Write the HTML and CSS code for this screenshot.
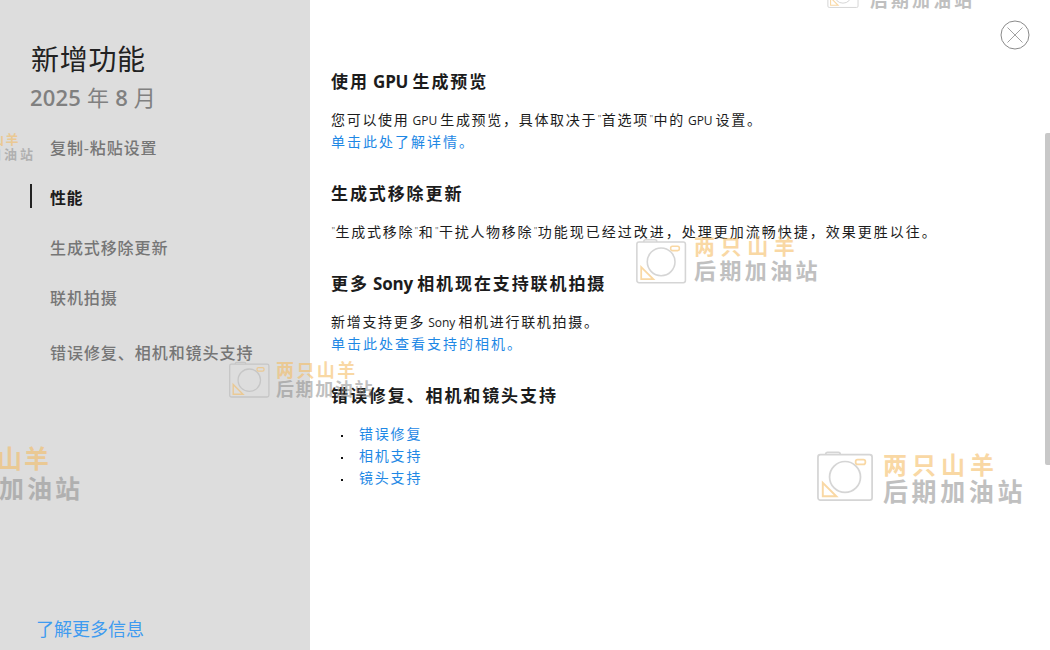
FILE: index.html
```html
<!DOCTYPE html>
<html lang="zh-CN">
<head>
<meta charset="utf-8">
<title>新增功能</title>
<link rel="stylesheet" href="styles.css">
</head>
<body>
<div class="app">
  <aside class="side">
    <h1 class="title">新增功能</h1>
    <div class="date">2025 <span class="cj">年</span> 8 <span class="cj">月</span></div>
    <nav class="nav">
      <a class="nav-item">复制-粘贴设置</a>
      <a class="nav-item active">性能</a>
      <a class="nav-item">生成式移除更新</a>
      <a class="nav-item">联机拍摄</a>
      <a class="nav-item last">错误修复、相机和镜头支持</a>
    </nav>
    <a class="more">了解更多信息</a>
  </aside>
  <main class="main">
    <section class="sec">
      <h2>使用<span class="hl"> GPU </span>生成预览</h2>
      <p>您可以使用<span class="lat">GPU</span>生成预览，具体取决于<span class="q">"</span>首选项<span class="q">"</span>中的<span class="lat">GPU</span>设置。<br><a>单击此处了解详情。</a></p>
    </section>
    <section class="sec">
      <h2>生成式移除更新</h2>
      <p><span class="q">"</span>生成式移除<span class="q">"</span>和<span class="q">"</span>干扰人物移除<span class="q">"</span><span class="wide">功能现已经过改进，处理更加流畅快捷，效果更胜以往。</span></p>
    </section>
    <section class="sec">
      <h2>更多<span class="hl"> Sony </span>相机现在支持联机拍摄</h2>
      <p>新增支持更多<span class="lat">Sony</span>相机进行联机拍摄。<br><a>单击此处查看支持的相机。</a></p>
    </section>
    <section class="sec">
      <h2>错误修复、相机和镜头支持</h2>
      <ul>
        <li><a>错误修复</a></li>
        <li><a>相机支持</a></li>
        <li><a>镜头支持</a></li>
      </ul>
    </section>
    <button class="close" aria-label="关闭">
      <svg width="30" height="30" viewBox="0 0 30 30"><circle cx="15" cy="15" r="14" fill="none" stroke="#8a8a8a" stroke-width="1"/><path d="M7.5 7.5 22.5 22.5M22.5 7.5 7.5 22.5" stroke="#8a8a8a" stroke-width=".8" fill="none"/></svg>
    </button>
    <div class="scroll"></div>
  </main>
  <div class="wm wm-top">
    <svg class="cam" viewBox="0 0 60 52"><use href="#cam"/></svg>
    <div class="wm-t"><b>两只山羊</b><i>后期加油站</i></div>
  </div>
  <div class="wm wm-a">
    <svg class="cam" viewBox="0 0 60 52"><use href="#cam"/></svg>
    <div class="wm-t"><b>两只山羊</b><i>后期加油站</i></div>
  </div>
  <div class="wm wm-b">
    <svg class="cam" viewBox="0 0 60 52"><use href="#cam"/></svg>
    <div class="wm-t"><b>两只山羊</b><i>后期加油站</i></div>
  </div>
  <div class="wm wm-c">
    <svg class="cam" viewBox="0 0 60 52"><use href="#cam"/></svg>
    <div class="wm-t"><b>两只山羊</b><i>后期加油站</i></div>
  </div>
  <div class="wm wm-d"><div class="wm-t"><b>两只山羊</b><i>后期加油站</i></div></div>
  <div class="wm wm-e"><div class="wm-t"><b>两只山羊</b><i>后期加油站</i></div></div>
</div>
<svg class="defs" width="0" height="0">
  <defs>
    <g id="cam">
      <path d="M9 4V3.500Q9 1.500 11 1.500H22Q24 1.500 24 3.500V4" fill="none" stroke="#b4b4b4" stroke-width="1.800"/>
      <rect x="1" y="4" width="56" height="47" rx="2.500" fill="none" stroke="#b4b4b4" stroke-width="1.800"/>
      <circle cx="29" cy="27" r="16" fill="none" stroke="#b4b4b4" stroke-width="1.800"/>
      <rect x="40" y="9" width="10" height="5" rx="2" fill="none" stroke="#f5b95a" stroke-width="1.800"/>
      <path d="M6 33V47H20Z" fill="none" stroke="#f5b95a" stroke-width="2"/>
    </g>
  </defs>
</svg>
</body>
</html>
```
FILE: styles.css
```css
* { box-sizing: border-box; }
html, body { margin: 0; height: 100%; overflow: hidden; background: #fff; }
body { font-family: "Open Sans", "Noto Sans CJK SC", sans-serif; color: #1c1c1c; }
.app { display: flex; width: 1050px; height: 650px; position: relative; overflow: hidden; }
.side { width: 310px; flex: none; background: #dddddd; display: flex; flex-direction: column; padding: 40px 0 0 31px; }
.title { margin: 0; font-size: 28px; line-height: 38px; font-weight: 400; color: #222; letter-spacing: .7px; }
.date { margin: 3px 0 0 -1px; font-size: 22px; line-height: 32px; font-weight: 600; color: #808080; letter-spacing: .2px; }
.cj { font-weight: 400; }
.nav { display: flex; flex-direction: column; margin: 13px 0 0 -1px; }
.nav-item { display: block; height: 50px; padding: 10px 0 0 20px; font-size: 16px; line-height: 24px; font-weight: 500; color: #767676; letter-spacing: .9px; }
.nav-item.active { color: #1c1c1c; font-weight: 700; position: relative; letter-spacing: .5px; }
.nav-item.active::before { content: ""; position: absolute; left: 0; top: 8px; width: 2px; height: 24px; background: #222; }
.nav-item.last { margin-top: 5px; letter-spacing: .95px; }
.more { margin-top: auto; margin-left: 5px; margin-bottom: 8px; font-size: 18px; line-height: 26px; color: #3f9bf0; }
.main { flex: 1; position: relative; padding: 69px 0 0 21px; }
.sec { margin-bottom: 28px; }
h2 { margin: 0 0 15px; font-size: 17px; line-height: 25px; font-weight: 700; color: #1c1c1c; letter-spacing: 1.9px; }
.hl { letter-spacing: -.2px; }
p { margin: 0; font-size: 14px; line-height: 22px; letter-spacing: 1.7px; color: #1c1c1c; }
p a { letter-spacing: 2px; }
.wide { letter-spacing: 2px; }
.lat { font-size: 12px; line-height: 0; letter-spacing: 0; margin: 0 3px 0 3px; }
.q { font-size: 9px; line-height: 0; letter-spacing: 0; color: #666; vertical-align: 3px; padding: 0 .5px; }
a { color: #1e88e5; }
ul { list-style: none; margin: 15px 0 0; padding: 0 0 0 28px; font-size: 14px; line-height: 22px; letter-spacing: 1.8px; }
li { position: relative; }
li::before { content: ""; position: absolute; left: -18px; top: 12px; width: 2px; height: 2px; background: #111; }
.close { position: absolute; right: 20px; top: 20px; width: 30px; height: 30px; padding: 0; border: 0; background: none; display: block; }
.close svg { display: block; }
.scroll { position: absolute; right: 0; top: 133px; width: 5px; height: 332px; background: #c8c8c8; border-radius: 2px 0 0 2px; }
.defs { position: absolute; }
.wm { position: absolute; display: flex; align-items: center; pointer-events: none; opacity: .55; }
.cam { display: block; flex: none; overflow: visible; }
.wm-t { display: flex; flex-direction: column; font-family: "Noto Sans CJK SC", sans-serif; font-weight: 700; }
.wm-t b { color: #f5b95a; font-weight: 700; }
.wm-t i { color: #8d8d8d; font-style: normal; font-weight: 700; }
.wm-b { left: 636px; top: 238px; gap: 6px; }
.wm-b .cam { width: 52px; height: 46px; }
.wm-b .wm-t { margin-top: -8px; }
.wm-b .wm-t b { font-size: 21px; line-height: 24px; letter-spacing: 5.600px; }
.wm-b .wm-t i { font-size: 22px; line-height: 24px; letter-spacing: 3.400px; }
.wm-c { left: 817px; top: 449px; gap: 8px; }
.wm-c .cam { width: 58px; height: 54px; }
.wm-c .wm-t b { font-size: 24px; line-height: 27px; letter-spacing: 5px; }
.wm-c .wm-t i { font-size: 25px; line-height: 26px; letter-spacing: 3.600px; }
.wm-a { left: 229px; top: 360px; gap: 5px; }
.wm-a .cam { width: 42px; height: 37px; }
.wm-a .wm-t b { font-size: 18px; line-height: 19px; letter-spacing: 2.400px; }
.wm-a .wm-t i { font-size: 18px; line-height: 19px; letter-spacing: 1.600px; }
.wm-top { left: 822px; top: -22px; gap: 5px; }
.wm-top .cam { width: 43px; height: 28px; }
.wm-top .wm-t b { font-size: 18px; line-height: 11px; visibility: hidden; }
.wm-top .wm-t i { font-size: 18px; line-height: 20px; letter-spacing: 3px; }
.wm-d { left: -46px; top: 131px; }
.wm-d .wm-t b { font-size: 13px; line-height: 15px; letter-spacing: 1.500px; padding-left: 8px; }
.wm-d .wm-t i { font-size: 13px; line-height: 15px; letter-spacing: 3px; margin-left: 2px; }
.wm-e { left: -57px; top: 442px; }
.wm-e .wm-t b { font-size: 25px; line-height: 30px; letter-spacing: 2px; }
.wm-e .wm-t i { font-size: 25px; line-height: 30px; letter-spacing: 3px; }
```
